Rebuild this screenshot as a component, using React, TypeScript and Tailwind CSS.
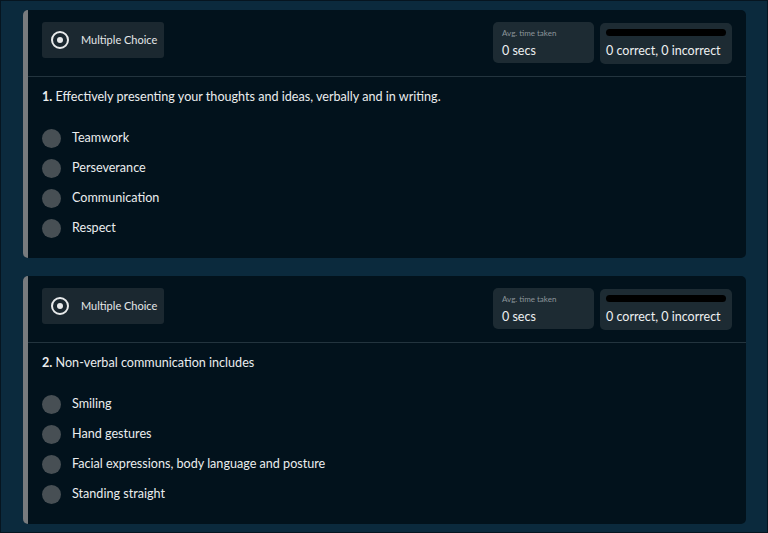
import React from "react";

type Question = {
  num: number;
  text: string;
  options: string[];
};

const questions: Question[] = [
  {
    num: 1,
    text: "Effectively presenting your thoughts and ideas, verbally and in writing.",
    options: ["Teamwork", "Perseverance", "Communication", "Respect"],
  },
  {
    num: 2,
    text: "Non-verbal communication includes",
    options: [
      "Smiling",
      "Hand gestures",
      "Facial expressions, body language and posture",
      "Standing straight",
    ],
  },
];

const QuestionCard: React.FC<{ q: Question }> = ({ q }) => {
  return (
    <div className="rounded-[5px] bg-[#02121c] border-l-[5px] border-[#787b7e]">
      {/* Header */}
      <div className="flex items-start justify-between pl-[14px] pr-[14px] pt-3 pb-[12px] border-b border-[#23343e]">
        <div className="flex items-center h-[36px] w-[122px] rounded-[3px] bg-[#1b2830] pl-[9px]">
          <span className="flex items-center justify-center w-[18px] h-[18px] rounded-full border-2 border-[#e8eaeb]">
            <span className="w-[6px] h-[6px] rounded-full bg-[#e8eaeb]" />
          </span>
          <span className="ml-[12px] text-[11px] text-[#e4e7e8]">Multiple Choice</span>
        </div>
        <div className="flex gap-[6px]">
          <div className="w-[101px] h-[41px] rounded-[5px] bg-[#1d2b33] px-[9px] pt-[6px]">
            <p className="text-[8px] leading-[10px] text-[#8b959a]">Avg. time taken</p>
            <p className="mt-[6px] text-[12.5px] leading-[14px] text-[#eef0f1]">0 secs</p>
          </div>
          <div className="w-[132px] h-[41px] rounded-[5px] bg-[#1d2b33] px-[6px] pt-[6px] mt-[1px]">
            <div className="h-[7px] rounded-full bg-black" />
            <p className="mt-[8px] text-[12.5px] leading-[14px] text-[#eef0f1]">
              0 correct, 0 incorrect
            </p>
          </div>
        </div>
      </div>
      {/* Body */}
      <div className="pl-[14px] pt-[12px] pb-[21px]">
        <p className="text-[12.6px] leading-[16px] text-[#eaedee]">
          <span className="font-bold">{q.num}.</span> {q.text}
        </p>
        <ul className="mt-[24px] flex flex-col gap-[12px]">
          {q.options.map((opt) => (
            <li key={opt} className="flex items-center h-[18px]">
              <span className="w-[19px] h-[19px] rounded-full bg-[#474f54]" />
              <span className="ml-[11px] text-[12.6px] text-[#eaedee]">{opt}</span>
            </li>
          ))}
        </ul>
      </div>
    </div>
  );
};

export default function App() {
  return (
    <div
      className="w-[768px] h-[533px] bg-[#0b2a3d] border border-[#061520] pl-[22px] pr-[21px] pt-[9px] overflow-hidden"
      style={{ fontFamily: "Lato, 'Noto Sans', sans-serif" }}
    >
      <div className="flex flex-col gap-[18px]">
        {questions.map((q) => (
          <QuestionCard key={q.num} q={q} />
        ))}
      </div>
    </div>
  );
}
